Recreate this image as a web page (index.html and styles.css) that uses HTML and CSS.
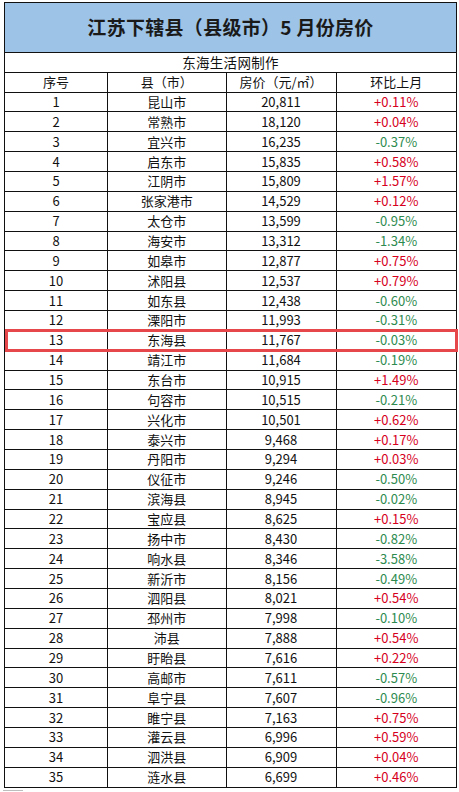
FILE: index.html
```html
<!DOCTYPE html>
<html lang="zh-CN">
<head>
<meta charset="utf-8">
<link rel="stylesheet" href="styles.css">
</head>
<body>
<div class="sheet">
<table class="grid">
<colgroup><col class="c1"><col class="c2"><col class="c3"><col class="c4"></colgroup>
<tr class="title"><td colspan="4">江苏下辖县（县级市）5 月份房价</td></tr>
<tr class="sub"><td colspan="4">东海生活网制作</td></tr>
<tr class="head"><td>序号</td><td>县（市）</td><td>房价（元/㎡）</td><td>环比上月</td></tr>
<tr><td>1</td><td>昆山市</td><td>20,811</td><td class="up">+0.11%</td></tr>
<tr><td>2</td><td>常熟市</td><td>18,120</td><td class="up">+0.04%</td></tr>
<tr><td>3</td><td>宜兴市</td><td>16,235</td><td class="dn">-0.37%</td></tr>
<tr><td>4</td><td>启东市</td><td>15,835</td><td class="up">+0.58%</td></tr>
<tr><td>5</td><td>江阴市</td><td>15,809</td><td class="up">+1.57%</td></tr>
<tr><td>6</td><td>张家港市</td><td>14,529</td><td class="up">+0.12%</td></tr>
<tr><td>7</td><td>太仓市</td><td>13,599</td><td class="dn">-0.95%</td></tr>
<tr><td>8</td><td>海安市</td><td>13,312</td><td class="dn">-1.34%</td></tr>
<tr><td>9</td><td>如皋市</td><td>12,877</td><td class="up">+0.75%</td></tr>
<tr><td>10</td><td>沭阳县</td><td>12,537</td><td class="up">+0.79%</td></tr>
<tr><td>11</td><td>如东县</td><td>12,438</td><td class="dn">-0.60%</td></tr>
<tr><td>12</td><td>溧阳市</td><td>11,993</td><td class="dn">-0.31%</td></tr>
<tr><td>13</td><td>东海县</td><td>11,767</td><td class="dn">-0.03%</td></tr>
<tr><td>14</td><td>靖江市</td><td>11,684</td><td class="dn">-0.19%</td></tr>
<tr><td>15</td><td>东台市</td><td>10,915</td><td class="up">+1.49%</td></tr>
<tr><td>16</td><td>句容市</td><td>10,515</td><td class="dn">-0.21%</td></tr>
<tr><td>17</td><td>兴化市</td><td>10,501</td><td class="up">+0.62%</td></tr>
<tr><td>18</td><td>泰兴市</td><td>9,468</td><td class="up">+0.17%</td></tr>
<tr><td>19</td><td>丹阳市</td><td>9,294</td><td class="up">+0.03%</td></tr>
<tr><td>20</td><td>仪征市</td><td>9,246</td><td class="dn">-0.50%</td></tr>
<tr><td>21</td><td>滨海县</td><td>8,945</td><td class="dn">-0.02%</td></tr>
<tr><td>22</td><td>宝应县</td><td>8,625</td><td class="up">+0.15%</td></tr>
<tr><td>23</td><td>扬中市</td><td>8,430</td><td class="dn">-0.82%</td></tr>
<tr><td>24</td><td>响水县</td><td>8,346</td><td class="dn">-3.58%</td></tr>
<tr><td>25</td><td>新沂市</td><td>8,156</td><td class="dn">-0.49%</td></tr>
<tr><td>26</td><td>泗阳县</td><td>8,021</td><td class="up">+0.54%</td></tr>
<tr><td>27</td><td>邳州市</td><td>7,998</td><td class="dn">-0.10%</td></tr>
<tr><td>28</td><td>沛县</td><td>7,888</td><td class="up">+0.54%</td></tr>
<tr><td>29</td><td>盱眙县</td><td>7,616</td><td class="up">+0.22%</td></tr>
<tr><td>30</td><td>高邮市</td><td>7,611</td><td class="dn">-0.57%</td></tr>
<tr><td>31</td><td>阜宁县</td><td>7,607</td><td class="dn">-0.96%</td></tr>
<tr><td>32</td><td>睢宁县</td><td>7,163</td><td class="up">+0.75%</td></tr>
<tr><td>33</td><td>灌云县</td><td>6,996</td><td class="up">+0.59%</td></tr>
<tr><td>34</td><td>泗洪县</td><td>6,909</td><td class="up">+0.04%</td></tr>
<tr><td>35</td><td>涟水县</td><td>6,699</td><td class="up">+0.46%</td></tr>
</table>
<div class="mark"></div>
<div class="tick"></div>
</div>
</body>
</html>
```
FILE: styles.css
```css
html, body {
  margin: 0;
  padding: 0;
  background: #ffffff;
}
.sheet {
  position: relative;
  width: 459px;
  height: 792px;
  padding: 2px 0 0 4px;
  box-sizing: border-box;
  font-family: "Noto Sans CJK SC", "Noto Sans", sans-serif;
  color: #111111;
}
.grid {
  border-collapse: collapse;
  width: 452px;
  table-layout: fixed;
}
.c1 { width: 103px; }
.c2 { width: 118.5px; }
.c3 { width: 110px; }
.c4 { width: 120.5px; }
.grid td {
  border: 1px solid #111111;
  text-align: center;
  vertical-align: middle;
  padding: 0;
  height: 18.86px;
  font-size: 13px;
  line-height: 14px;
  white-space: nowrap;
}
.title td {
  height: 48.5px;
  background: #9dc3e6;
  font-size: 19px;
  font-weight: 700;
  color: #1a1a1a;
  letter-spacing: 0.3px;
}
.sub td {
  height: 19px;
  font-size: 13.5px;
  letter-spacing: 0.3px;
}
.head td {
  height: 19px;
}
.grid td.up { color: #d6001c; }
.grid td.dn { color: #2e8b50; }
.mark {
  position: absolute;
  left: 5px;
  top: 329px;
  width: 453px;
  height: 23px;
  border: 3px solid #e5474b;
  box-sizing: border-box;
}
.tick {
  position: absolute;
  left: 3px;
  top: 790px;
  width: 20px;
  height: 1px;
  background: #bdbdbd;
}
```
